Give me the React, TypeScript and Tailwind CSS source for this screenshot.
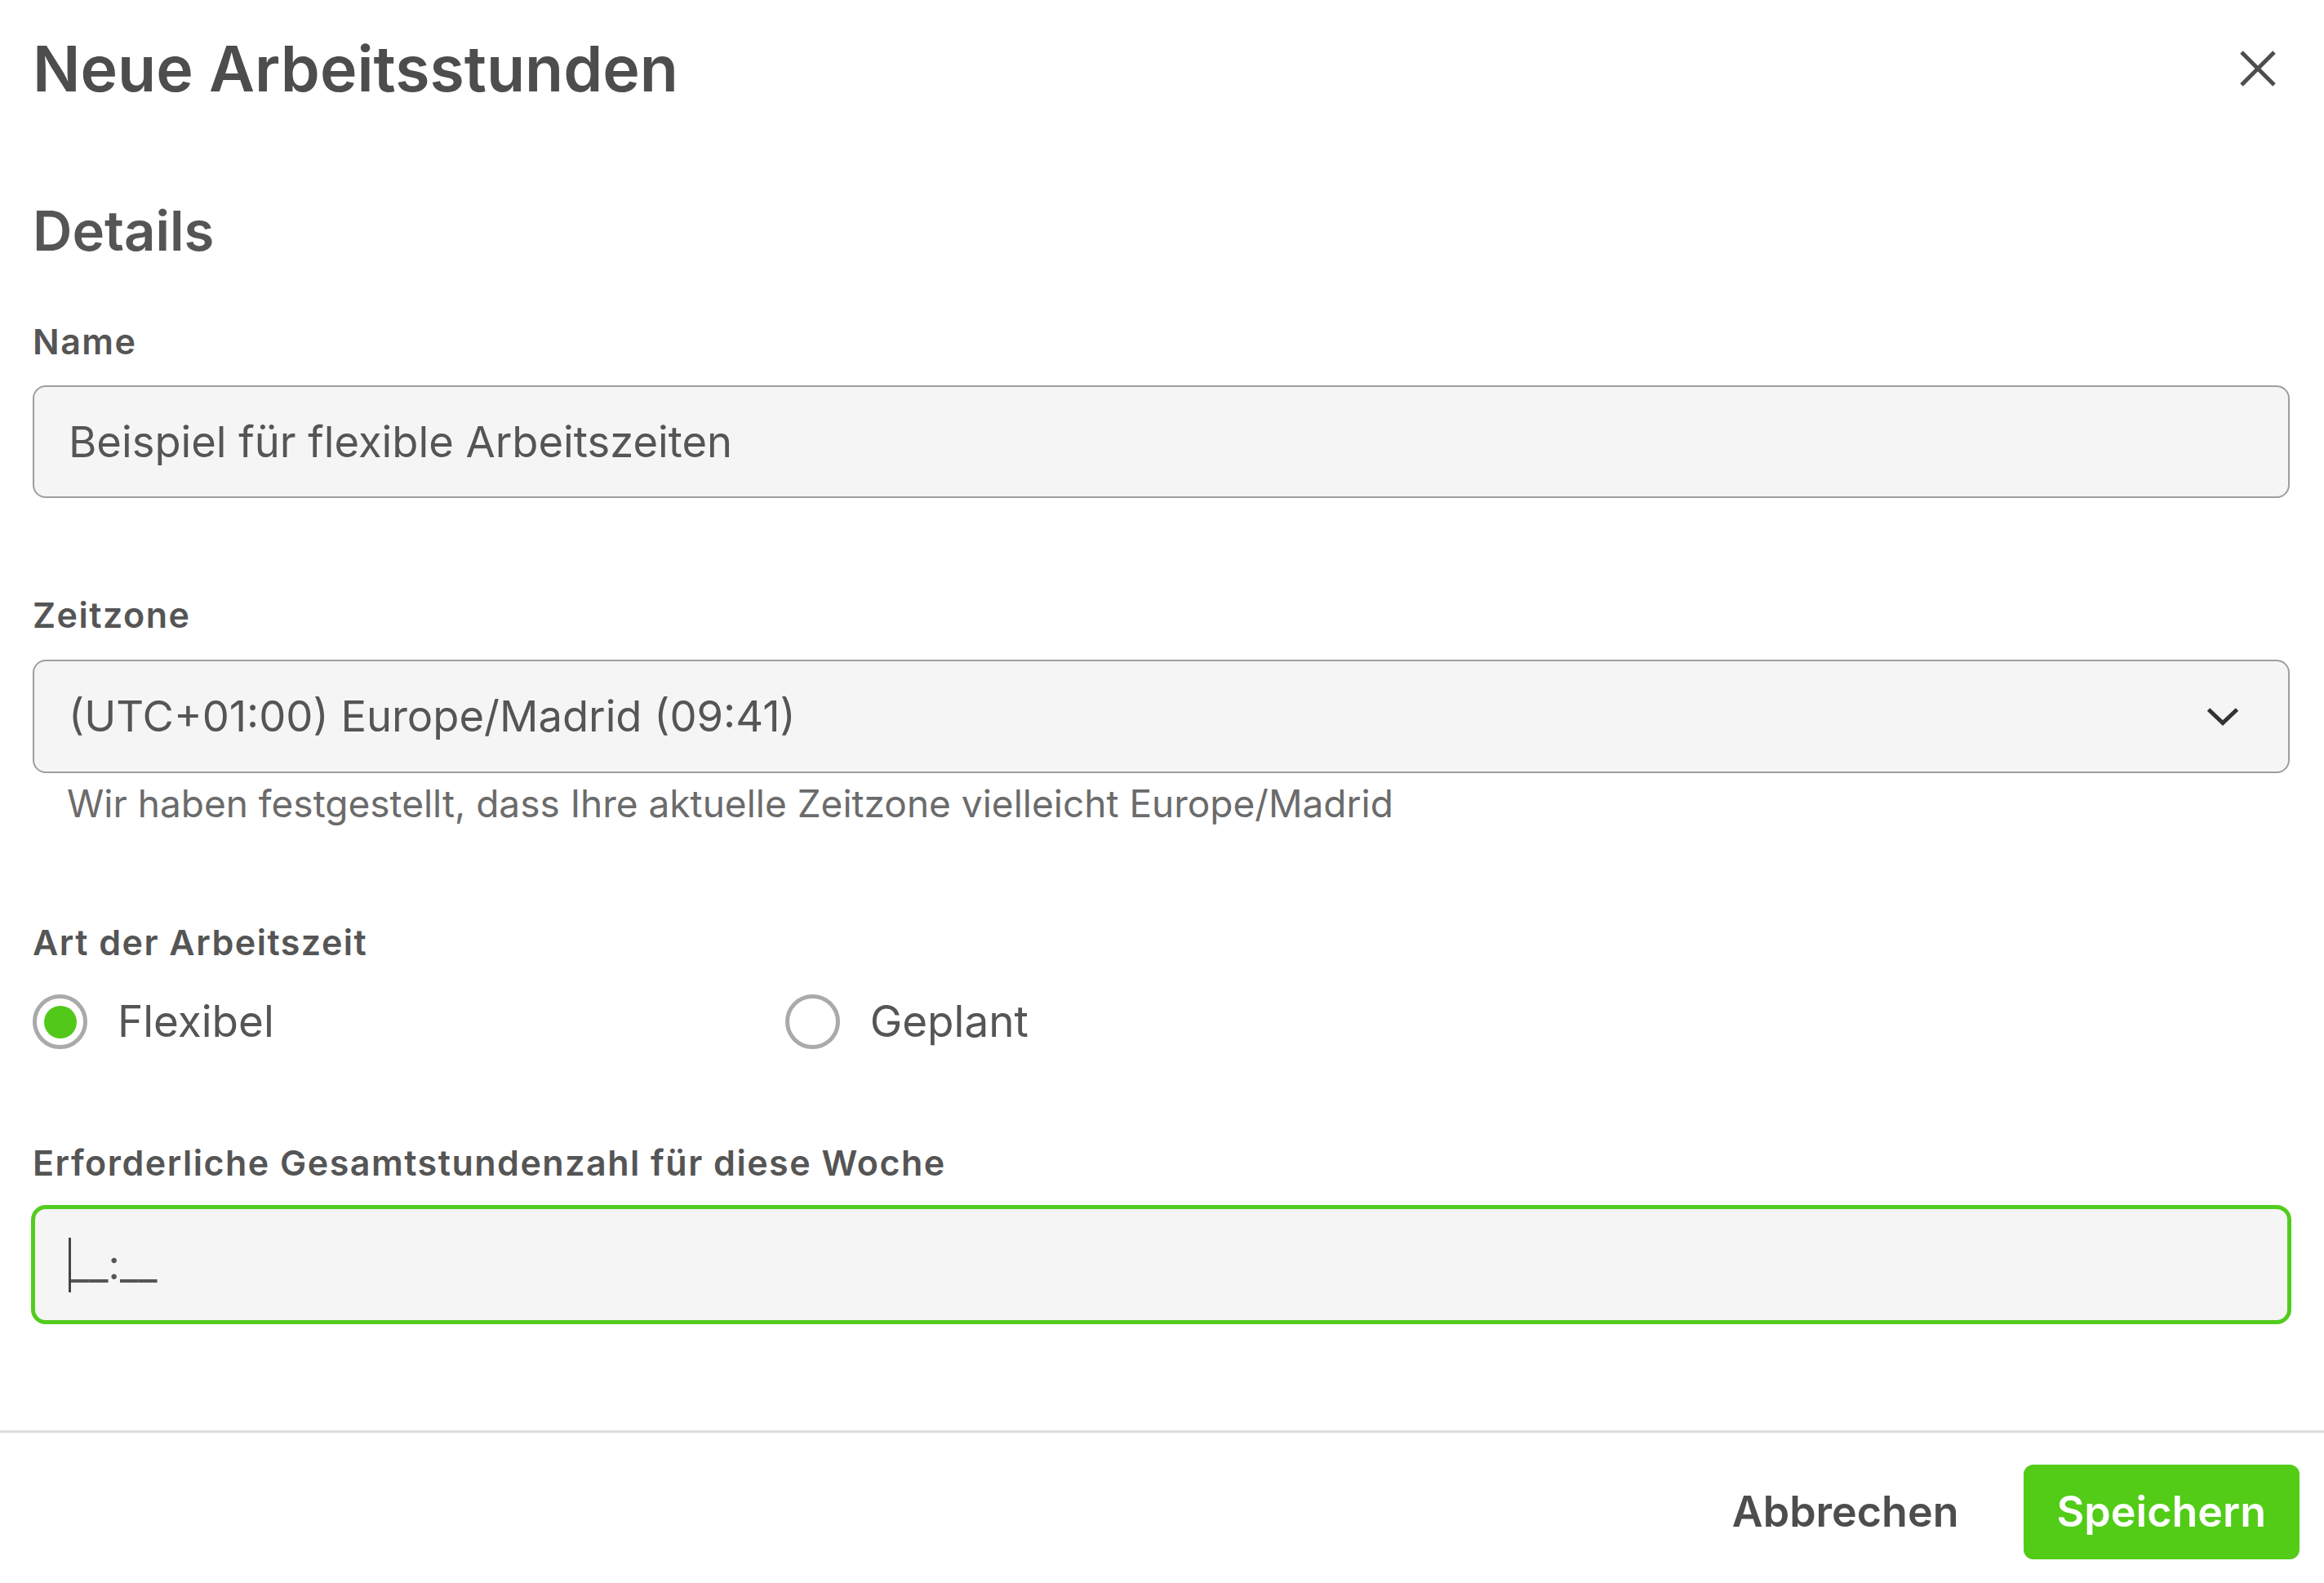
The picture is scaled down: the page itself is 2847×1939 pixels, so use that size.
import React from "react";

const font = { fontFamily: "Inter, 'Noto Sans', sans-serif" };

function CloseIcon() {
    return (
        <svg width="46" height="46" viewBox="0 0 46 46" fill="none" stroke="#4d4d4d" strokeWidth="5">
            <line x1="3" y1="3" x2="43" y2="43" />
            <line x1="43" y1="3" x2="3" y2="43" />
        </svg>
    );
}

function Chevron() {
    return (
        <svg width="40" height="23" viewBox="0 0 40 23" fill="none" stroke="#333333" strokeWidth="5">
            <polyline points="2.5,3 20,19.5 37.5,3" />
        </svg>
    );
}

function Label({ children, className = "" }: { children: React.ReactNode; className?: string }) {
    return (
        <div className={`text-[43px] leading-[40px] font-semibold tracking-[0.035em] text-[#555555] ${className}`}>
            {children}
        </div>
    );
}

function Radio({ checked, label }: { checked?: boolean; label: string }) {
    return (
        <div className="flex items-center gap-[37px]">
            <div className="flex h-[67px] w-[67px] items-center justify-center rounded-full border-[5px] border-[#aaaaaa] bg-white">
                {checked && <div className="h-[40px] w-[40px] rounded-full bg-[#52c91a]" />}
            </div>
            <span className="text-[53px] leading-none text-[#555555]">{label}</span>
        </div>
    );
}

export default function App() {
    return (
        <div className="flex h-[1939px] w-full flex-col bg-white" style={font}>
            {/* header */}
            <div className="flex items-center justify-between pl-[40px] pr-[58px] pt-[44px]">
                <h1 className="text-[77px] leading-[80px] font-semibold text-[#4d4d4d]">Neue Arbeitsstunden</h1>
                <button className="flex items-center justify-center">
                    <CloseIcon />
                </button>
            </div>

            {/* form body */}
            <div className="flex flex-1 flex-col pl-[40px] pr-[42px]">
                <h2 className="mt-[125px] text-[67px] leading-[67px] font-semibold text-[#555555]">Details</h2>

                <Label className="mt-[82px]">Name</Label>
                <div className="mt-[34px] flex h-[138px] items-center rounded-[16px] border-2 border-[#9e9e9e] bg-[#f5f5f5] px-[42px]">
                    <span className="text-[52.5px] leading-none text-[#555555]">Beispiel für flexible Arbeitszeiten</span>
                </div>

                <Label className="mt-[123px]">Zeitzone</Label>
                <div className="mt-[35px] flex h-[139px] items-center justify-between rounded-[16px] border-2 border-[#9e9e9e] bg-[#f5f5f5] pl-[42px] pr-[60px]">
                    <span className="text-[52.5px] leading-none text-[#555555]">(UTC+01:00) Europe/Madrid (09:41)</span>
                    <Chevron />
                </div>
                <div className="mt-[14px] pl-[42px] text-[46px] leading-[46px] text-[#6b6b6b]">
                    Wir haben festgestellt, dass Ihre aktuelle Zeitzone vielleicht Europe/Madrid
                </div>

                <Label className="mt-[127px]">Art der Arbeitszeit</Label>
                <div className="mt-[44px] grid grid-cols-3">
                    <Radio checked label="Flexibel" />
                    <Radio label="Geplant" />
                </div>

                <Label className="mt-[119px]">Erforderliche Gesamtstundenzahl für diese Woche</Label>
                <div className="-mx-[2px] mt-[32px] flex h-[146px] items-center rounded-[18px] border-[5px] border-[#52cc1e] bg-[#f5f5f5] pl-[41px]">
                    <span className="h-[67px] w-[3px] bg-[#444444]" />
                    <span className="text-[50px] leading-none text-[#555555]">__:__</span>
                </div>
            </div>

            {/* footer */}
            <div className="flex items-center justify-end gap-[38px] border-t-[3px] border-[#dcdcdc] pb-[29px] pr-[30px] pt-[39px]">
                <button className="h-[116px] px-[41px] text-[52px] font-semibold text-[#4d4d4d]">Abbrechen</button>
                <button className="h-[116px] rounded-[12px] bg-[#52cc17] px-[41px] text-[52px] font-semibold text-white">
                    Speichern
                </button>
            </div>
        </div>
    );
}
